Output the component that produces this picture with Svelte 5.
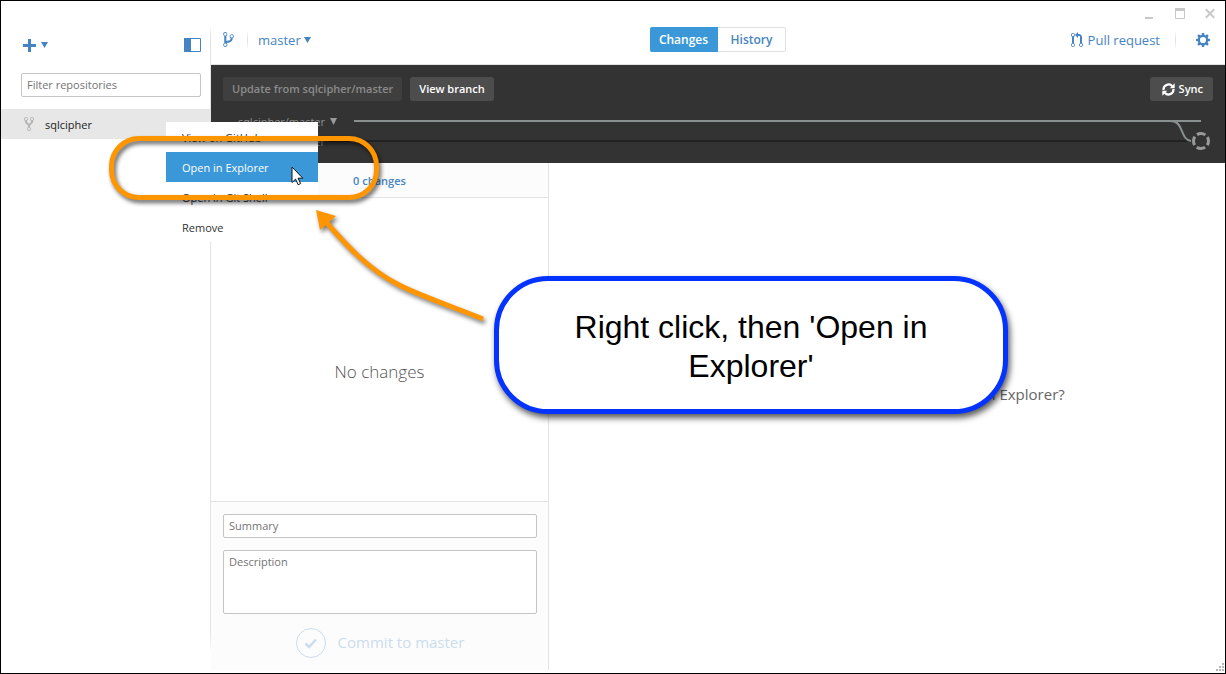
<script>
  const branchPath =
    'M10 5c0-1.11-.89-2-2-2a1.993 1.993 0 0 0-1 3.72v.3c-.02.52-.23.98-.63 1.38-.4.4-.86.61-1.38.63-.83.02-1.48.16-2 .45V4.72a1.993 1.993 0 0 0-1-3.72C.88 1 0 1.89 0 3a2 2 0 0 0 1 1.72v6.56c-.59.35-1 .99-1 1.72 0 1.11.89 2 2 2 1.11 0 2-.89 2-2 0-.53-.2-1-.53-1.36.09-.06.48-.41.59-.47.25-.11.56-.17.94-.17 1.05-.05 1.95-.45 2.75-1.25S8.95 7.77 9 6.73h-.02C9.59 6.37 10 5.73 10 5zM2 1.8c.66 0 1.2.55 1.2 1.2 0 .65-.55 1.2-1.2 1.2C1.35 4.2.8 3.65.8 3c0-.65.55-1.2 1.2-1.2zm0 12.41c-.66 0-1.2-.55-1.2-1.2 0-.65.55-1.2 1.2-1.2.65 0 1.2.55 1.2 1.2 0 .65-.55 1.2-1.2 1.2zm6-8c-.66 0-1.2-.55-1.2-1.2 0-.65.55-1.2 1.2-1.2.65 0 1.2.55 1.2 1.2 0 .65-.55 1.2-1.2 1.2z';
  const forkPath =
    'M8 1a1.993 1.993 0 0 0-1 3.72V6L5 8 3 6V4.72A1.993 1.993 0 0 0 2 1a1.993 1.993 0 0 0-1 3.72V6.5l3 3v1.78A1.993 1.993 0 0 0 5 15a1.993 1.993 0 0 0 1-3.72V9.5l3-3V4.72A1.993 1.993 0 0 0 8 1zM2 4.2C1.34 4.2.8 3.65.8 3c0-.65.55-1.2 1.2-1.2.65 0 1.2.55 1.2 1.2 0 .65-.55 1.2-1.2 1.2zm3 10c-.66 0-1.2-.55-1.2-1.2 0-.65.55-1.2 1.2-1.2.65 0 1.2.55 1.2 1.2 0 .65-.55 1.2-1.2 1.2zm3-10c-.66 0-1.2-.55-1.2-1.2 0-.65.55-1.2 1.2-1.2.65 0 1.2.55 1.2 1.2 0 .65-.55 1.2-1.2 1.2z';
  const pullPath =
    'M11 11.28V5c-.03-.78-.34-1.47-.94-2.06C9.46 2.35 8.78 2.03 8 2H7V0L4 3l3 3V4h1c.27.02.48.11.69.31.21.2.3.42.31.69v6.28A1.993 1.993 0 0 0 10 15a1.993 1.993 0 0 0 1-3.72zm-1 2.92c-.66 0-1.2-.55-1.2-1.2 0-.65.55-1.2 1.2-1.2.65 0 1.2.55 1.2 1.2 0 .65-.55 1.2-1.2 1.2zM4 3c0-1.11-.89-2-2-2a1.993 1.993 0 0 0-1 3.72v6.56A1.993 1.993 0 0 0 2 15a1.993 1.993 0 0 0 1-3.72V4.72c.59-.34 1-.98 1-1.72zm-.8 10c0 .66-.55 1.2-1.2 1.2-.65 0-1.2-.55-1.2-1.2 0-.65.55-1.2 1.2-1.2.65 0 1.2.55 1.2 1.2zM2 4.2C1.34 4.2.8 3.65.8 3c0-.65.55-1.2 1.2-1.2.65 0 1.2.55 1.2 1.2 0 .65-.55 1.2-1.2 1.2z';
  const teeth = [0, 45, 90, 135, 180, 225, 270, 315];
  const menuItems = ['View on GitHub', 'Open in Explorer', 'Open in Git Shell', 'Remove'];
  let active = $state('Open in Explorer');
  let tab = $state('Changes');
</script>

<div class="window">
  <div class="titlebar">
    <button aria-label="Minimize"><svg width="10" height="11" viewBox="0 0 10 11"><path d="M0 9h8v2H0z" fill="#c8c8c8" /></svg></button>
    <button aria-label="Maximize"><svg width="10" height="11" viewBox="0 0 10 11"><path d="M.5 1v9.500h9V1" fill="none" stroke="#c8c8c8" /><path d="M0 0h10v3H0z" fill="#c8c8c8" /></svg></button>
    <button aria-label="Close"><svg width="10" height="11" viewBox="0 0 10 11"><path d="M.8 1.300l8.400 8.400M9.200 1.300L.8 9.700" stroke="#c8c8c8" stroke-width="2" /></svg></button>
  </div>

  <div class="body">
    <aside class="sidebar">
      <div class="tools">
        <button class="add" aria-label="Add repository">
          <svg width="13" height="13" viewBox="0 0 13 13"><path d="M5 0h3v5h5v3H8v5H5V8H0V5h5z" fill="currentColor" /></svg>
          <svg width="7" height="6" viewBox="0 0 7 6"><path d="M0 0h7L3.500 6z" fill="currentColor" /></svg>
        </button>
        <button aria-label="Toggle sidebar">
          <svg width="17" height="14" viewBox="0 0 17 14"><path d="M.5.5h16v13H.5z" fill="#fff" stroke="currentColor" /><path d="M0 0h7v14H0z" fill="currentColor" /></svg>
        </button>
      </div>
      <input class="field filter" type="text" placeholder="Filter repositories" aria-label="Filter repositories" />
      <a class="repo" href="#sqlcipher">
        <svg width="10" height="16" viewBox="0 0 10 16"><path d={forkPath} fill="#b4b4b4" /></svg>
        <span>sqlcipher</span>
      </a>
    </aside>

    <main>
      <header class="header">
        <div class="left">
          <svg width="11" height="17" viewBox="0 0 10 16"><path d={branchPath} fill="currentColor" /></svg>
          <i class="rule"></i>
          <button class="branch">master
            <svg width="7" height="6" viewBox="0 0 7 6"><path d="M0 0h7L3.500 6z" fill="currentColor" /></svg>
          </button>
        </div>
        <div class="tabs">
          {#each ['Changes', 'History'] as name}
            <button class:on={tab === name} onclick={() => (tab = name)}>{name}</button>
          {/each}
        </div>
        <div class="right">
          <button class="pull">
            <svg width="12" height="16" viewBox="0 0 12 16"><path d={pullPath} fill="currentColor" /></svg>
            Pull request
          </button>
          <i class="rule"></i>
          <button aria-label="Settings">
            <svg width="14" height="14" viewBox="0 0 14 14">
              <circle cx="7" cy="7" r="4.200" fill="none" stroke="currentColor" stroke-width="2.200" />
              {#each teeth as angle}
                <path d="M5.500 2.500L5.900 0h2.200l.4 2.500z" fill="currentColor" transform="rotate({angle} 7 7)" />
              {/each}
            </svg>
          </button>
        </div>
      </header>

      <section class="compare">
        <div class="actions">
          <button disabled>Update from sqlcipher/master</button>
          <button>View branch</button>
          <button class="sync">
            <svg width="13" height="13" viewBox="0 0 13 13">
              <path d="M1.500 7V6.500a5 5 0 0 1 8.800-3.200M11.500 6v.5a5 5 0 0 1-8.800 3.200" fill="none" stroke="currentColor" stroke-width="2.200" />
              <path d="M12.700.3v4.900H7.800zM.3 12.700V7.800h4.900z" fill="currentColor" />
            </svg>
            Sync
          </button>
        </div>
        <div class="graph">
          <div class="track">
            <span>sqlcipher/master</span>
            <svg class="caret" width="7" height="7" viewBox="0 0 7 7"><path d="M0 0h7L3.500 7z" fill="#999" /></svg>
            <i class="line upper"></i>
          </div>
          <div class="track">
            <span>master</span>
            <i class="line lower"></i>
            <svg width="20" height="20" viewBox="0 0 20 20"><circle cx="10" cy="10" r="7.500" fill="none" stroke="#999" stroke-width="3" stroke-dasharray="8.780 3" stroke-dashoffset="4.390" /></svg>
          </div>
          <svg class="merge" width="22" height="24" viewBox="0 0 22 24"><path d="M0 2c13 0 9 19 20 20" fill="none" stroke="#899090" stroke-width="2" /></svg>
        </div>
      </section>

      <div class="panes">
        <section class="changes">
          <h2>0 changes</h2>
          <p class="empty">No changes</p>
          <form class="commit">
            <input class="field" type="text" placeholder="Summary" aria-label="Summary" />
            <textarea class="field" placeholder="Description" aria-label="Description"></textarea>
            <button type="button" disabled>
              <svg width="30" height="30" viewBox="0 0 30 30"><circle cx="15" cy="15" r="14.500" fill="none" stroke="currentColor" /><path d="M9.500 15.500l3.500 3.500 7-7.500" fill="none" stroke="currentColor" stroke-width="2.500" /></svg>
              <span>Commit to master</span>
            </button>
          </form>
        </section>
        <section class="detail">
          <p>Would you like to open this repository in Explorer?</p>
        </section>
      </div>
    </main>
  </div>

  <svg class="grip" width="9" height="9" viewBox="0 0 9 9"><path d="M6 0h2v2H6zM3 3h2v2H3zM6 3h2v2H6zM0 6h2v2H0zM3 6h2v2H3zM6 6h2v2H6z" fill="#b5b5b5" /></svg>

  <div class="menu" role="menu">
    {#each menuItems as item}
      <button role="menuitem" class:on={active === item} onmouseenter={() => (active = item)}>{item}</button>
    {/each}
  </div>

  <svg class="pointer" width="13" height="20" viewBox="0 0 13 20"><path d="M1 1v15.500l3.600-3.400 2.500 5.600 2.500-1.100-2.500-5.400h4.700z" fill="#fff" stroke="#111" /></svg>

  <div class="ring"></div>
  <svg class="arrow" width="190" height="130" viewBox="0 0 190 130">
    <path d="M15 16C36 40 57 63 88 79C112 91 143 101 172 113" fill="none" stroke="#ff9500" stroke-width="5" />
    <path d="M5 4l20 6-16 14z" fill="#ff9500" />
  </svg>
  <div class="callout">Right click, then 'Open in Explorer'</div>
</div>

<style>
  :global(body) { margin: 0; }
  .window {
    --blue: #4584c1;
    position: relative;
    box-sizing: border-box;
    min-height: 100vh;
    display: flex;
    flex-direction: column;
    border: 1px solid #000;
    background: #fff;
    color: #333;
    font: 11px/16px "Open Sans", "Noto Sans", sans-serif;
    overflow: hidden;
  }
  button {
    margin: 0;
    padding: 0;
    border: 0;
    background: none;
    color: inherit;
    font: inherit;
    display: flex;
    align-items: center;
  }
  svg { display: block; flex: none; }
  i { display: block; }
  .titlebar {
    display: flex;
    justify-content: flex-end;
    gap: 20px;
    height: 24px;
    padding-right: 10px;
  }
  .body { flex: 1; display: flex; }

  .sidebar {
    width: 210px;
    flex: none;
    background: linear-gradient(transparent, #e3e3e3 12px, #e3e3e3 calc(100% - 40px), transparent calc(100% - 20px)) right / 1px 100% no-repeat;
  }
  .tools {
    display: flex;
    justify-content: space-between;
    align-items: center;
    height: 40px;
    padding: 0 10px 0 22px;
    color: var(--blue);
  }
  .add { gap: 5px; }
  .field {
    display: block;
    box-sizing: border-box;
    width: 100%;
    height: 24px;
    margin: 0;
    padding: 0 5px 2px;
    border: 1px solid #c5c5c5;
    border-radius: 2px;
    background: #fff;
    color: #333;
    font: inherit;
    outline: 0;
    resize: none;
  }
  .field::placeholder { color: #747474; opacity: 1; }
  .filter { width: 180px; margin: 8px 9px 12px 20px; }
  .repo {
    display: flex;
    align-items: center;
    gap: 11px;
    height: 30px;
    margin-right: 1px;
    padding-left: 23px;
    background: #e7e7e7;
    color: #222;
    text-decoration: none;
  }
  .repo span { padding-top: 2px; }

  main { flex: 1; min-width: 0; display: flex; flex-direction: column; }
  .header {
    box-sizing: border-box;
    height: 40px;
    padding: 0 15px 10px 12px;
    border-bottom: 1px solid #e3e3e3;
    display: grid;
    grid-template-columns: 1fr auto 1fr;
    align-items: center;
    color: var(--blue);
    font-size: 13px;
  }
  .left, .right { display: flex; align-items: center; }
  .right { justify-content: flex-end; }
  .rule { width: 1px; height: 18px; background: linear-gradient(transparent, #ddd, transparent); }
  .left .rule { margin: 0 10px 0 13px; }
  .right .rule { margin: 0 20px 0 15px; }
  .branch { gap: 3px; }
  .pull { gap: 5px; }
  .tabs { display: flex; font-size: 12px; font-weight: 600; margin-left: 3px; }
  .tabs button {
    box-sizing: border-box;
    width: 68px;
    height: 25px;
    justify-content: center;
    border: 1px solid #e0e0e0;
    border-left: 0;
    border-radius: 0 2px 2px 0;
  }
  .tabs .on { background: #3a98d8; border-color: #3a98d8; color: #fff; border-radius: 2px 0 0 2px; }

  .compare { padding: 12px; background: #333; }
  .actions { display: flex; gap: 8px; }
  .actions button {
    height: 24px;
    padding: 0 9px;
    border-radius: 3px;
    background: #4d4d4d;
    color: #fff;
    font-weight: 600;
  }
  .actions button:disabled { background: #3f3f3f; color: #8b8b8b; }
  .actions .sync { margin-left: auto; gap: 4px; padding: 0 10px 0 12px; }
  .graph { position: relative; padding-top: 10px; color: #8f8f8f; }
  .track { display: flex; align-items: center; height: 20px; }
  .track span { width: 102px; padding-top: 2px; text-align: right; }
  .caret { margin: 0 17px 0 5px; }
  .line { flex: 1; height: 2px; }
  .upper { margin-right: 12px; background: #899090; }
  .lower { margin-left: 4px; background: #222; }
  .track svg:last-child { margin-right: 2px; }
  .merge { position: absolute; right: 20px; top: 18px; }

  .panes { flex: 1; display: flex; margin-bottom: 3px; }
  .changes {
    width: 337px;
    flex: none;
    border-right: 1px solid #e3e3e3;
    display: flex;
    flex-direction: column;
  }
  h2 {
    margin: 0;
    height: 34px;
    border-bottom: 1px solid #e3e3e3;
    background: #fcfcfc;
    color: var(--blue);
    font-size: 11px;
    font-weight: 600;
    line-height: 36px;
    text-align: center;
  }
  p { margin: 0; color: #666; }
  .empty {
    flex: 1;
    display: flex;
    align-items: center;
    justify-content: center;
    padding-top: 44px;
    color: #555;
    font-size: 17px;
    font-weight: 300;
  }
  .commit {
    display: flex;
    flex-direction: column;
    gap: 12px;
    padding: 12px 11px 12px 12px;
    border-top: 1px solid #e3e3e3;
    background: #fcfcfc;
  }
  textarea.field { height: 64px; padding-top: 3px; }
  .commit button {
    align-self: center;
    gap: 12px;
    padding-top: 2px;
    color: #cbdcec;
    font-size: 15px;
  }
  .commit span { padding-bottom: 2px; }
  .detail {
    flex: 1;
    display: flex;
    align-items: center;
    justify-content: center;
    padding: 0 0 46px 4px;
    font-size: 15px;
  }

  .grip { position: absolute; right: 0; bottom: 1px; }
  .menu { position: absolute; left: 165px; top: 121px; width: 152px; background: #fff; }
  .menu button { width: 100%; height: 30px; padding: 2px 16px 0; }
  .menu .on { background: #3a98d8; color: #fff; }
  .pointer { position: absolute; left: 290px; top: 165px; }
  .ring {
    position: absolute;
    left: 108px;
    top: 135px;
    box-sizing: border-box;
    width: 270px;
    height: 64px;
    border: 5px solid #ff9500;
    border-radius: 30px;
    filter: drop-shadow(2px 3px 2px rgba(0, 0, 0, 0.6));
    pointer-events: none;
  }
  .arrow {
    position: absolute;
    left: 310px;
    top: 205px;
    filter: drop-shadow(2px 3px 2px rgba(0, 0, 0, 0.5));
    pointer-events: none;
  }
  .callout {
    position: absolute;
    left: 493px;
    top: 275px;
    box-sizing: border-box;
    width: 514px;
    padding: 27px 60px 23px;
    border: 5px solid #0433ff;
    border-radius: 54px;
    background: #fff;
    box-shadow: 2px 4px 6px rgba(0, 0, 0, 0.65);
    color: #000;
    font: 32px/39px "Liberation Sans", Arial, sans-serif;
    text-align: center;
  }
</style>
